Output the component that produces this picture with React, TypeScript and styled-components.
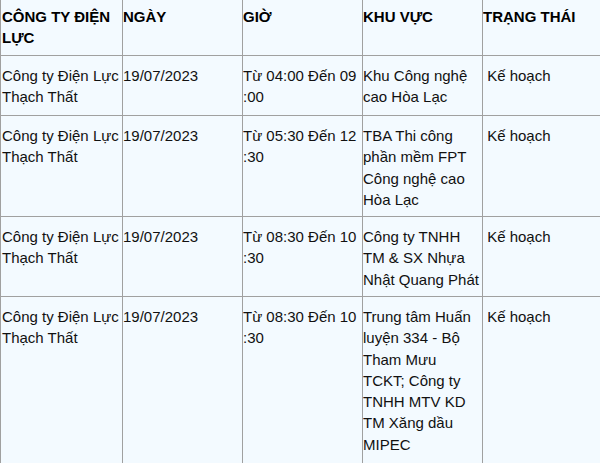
import React from "react";
import styled, { createGlobalStyle } from "styled-components";

const GlobalStyle = createGlobalStyle`
    html, body {
        margin: 0;
        padding: 0;
        background-color: #ffffff;
        overflow: hidden;
    }
`;

const Table = styled.div`
    display: grid;
    grid-template-columns: 121px 119px 119px 119px 119px;
    grid-template-rows: 55px 59px 100px 79px auto;
    gap: 1px;
    padding: 0 1px 1px 1px;
    width: max-content;
    background-color: #a0a0a0;
    font-family: "Liberation Sans", Arial, sans-serif;
    font-size: 15px;
    line-height: 21.3px;
`;

const Cell = styled.div<{ $head?: boolean; $first?: boolean }>`
    background-color: #f3faff;
    color: ${(p) => (p.$head ? "#000000" : "#111111")};
    font-weight: ${(p) => (p.$head ? "bold" : "normal")};
    padding: ${(p) => (p.$head ? "6px" : "9px")} 0 8px ${(p) => (p.$first ? "1px" : "0")};
    overflow: hidden;
    white-space: nowrap;
`;

const headers = [["CÔNG TY ĐIỆN", "LỰC"], ["NGÀY"], ["GIỜ"], ["KHU VỰC"], ["TRẠNG THÁI"]];

const rows: string[][][] = [
    [
        ["Công ty Điện Lực", "Thạch Thất"],
        ["19/07/2023"],
        ["Từ 04:00 Đến 09", ":00"],
        ["Khu Công nghệ", "cao Hòa Lạc"],
        ["\u00a0Kế hoạch"]
    ],
    [
        ["Công ty Điện Lực", "Thạch Thất"],
        ["19/07/2023"],
        ["Từ 05:30 Đến 12", ":30"],
        ["TBA Thi công", "phần mềm FPT", "Công nghệ cao", "Hòa Lạc"],
        ["\u00a0Kế hoạch"]
    ],
    [
        ["Công ty Điện Lực", "Thạch Thất"],
        ["19/07/2023"],
        ["Từ 08:30 Đến 10", ":30"],
        ["Công ty TNHH", "TM & SX Nhựa", "Nhật Quang Phát"],
        ["\u00a0Kế hoạch"]
    ],
    [
        ["Công ty Điện Lực", "Thạch Thất"],
        ["19/07/2023"],
        ["Từ 08:30 Đến 10", ":30"],
        ["Trung tâm Huấn", "luyện 334 - Bộ", "Tham Mưu", "TCKT; Công ty", "TNHH MTV KD", "TM Xăng dầu", "MIPEC"],
        ["\u00a0Kế hoạch"]
    ]
];

const Lines = ({ lines }: { lines: string[] }) => (
    <>
        {lines.map((line, i) => (
            <React.Fragment key={i}>
                {i > 0 && <br />}
                {line}
            </React.Fragment>
        ))}
    </>
);

export default function App() {
    return (
        <>
            <GlobalStyle />
            <Table>
                {headers.map((h, i) => (
                    <Cell $head $first={i === 0} key={"h" + i}>
                        <Lines lines={h} />
                    </Cell>
                ))}
                {rows.map((row, r) =>
                    row.map((cell, c) => (
                        <Cell $first={c === 0} key={r + "-" + c}>
                            <Lines lines={cell} />
                        </Cell>
                    ))
                )}
            </Table>
        </>
    );
}
